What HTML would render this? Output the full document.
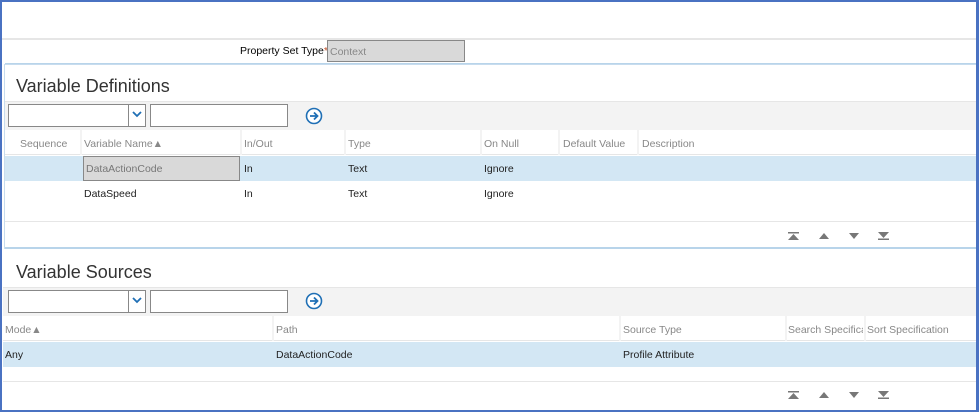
<!DOCTYPE html>
<html><head><style>
*{margin:0;padding:0;box-sizing:border-box}
body{width:979px;height:412px;position:relative;background:#fff;font-family:"Liberation Sans",sans-serif;font-size:10.5px;color:#222;overflow:hidden}
.a{position:absolute}
.frame{left:0;top:0;width:979px;height:412px;border:2px solid #4a72c2;border-right-width:3px}
.h{color:#888;font-size:10.5px}
.t{font-size:18px;color:#333}
.sel{background:#d3e7f4}
.inp{background:#fff;border:1px solid #888}
.sep{position:absolute;width:2px;height:25px;background:#f3f3f3}
</style></head><body>
<div class="a" style="left:0;top:38px;width:979px;height:2px;background:#e6e6e6"></div>
<div class="a" style="left:240px;top:45px;font-size:10.5px;color:#000">Property Set Type<span style="color:#c0502a">*</span></div>
<div class="a" style="left:327px;top:40px;width:138px;height:22px;background:#d9d9d9;border:1px solid #888;color:#888;padding:5px 2px;font-size:10.5px">Context</div>
<div class="a" style="left:5px;top:63px;width:974px;height:2px;background:#b8d4ea"></div>
<div class="a" style="left:4px;top:64px;width:974px;height:185px;border:1px solid #c7dcee"></div>
<div class="a t" style="left:16px;top:76px">Variable Definitions</div>
<div class="a" style="left:5px;top:101px;width:971px;height:29px;background:#f3f3f3;border-top:1px solid #e6e6e6"></div>
<div class="a inp" style="left:8px;top:104px;width:138px;height:23px"></div>
<div class="a" style="left:128px;top:104px;width:1px;height:23px;background:#888"></div>
<svg class="a" style="left:132px;top:110px" width="10" height="8"><path d="M1 2L5 6L9 2" stroke="#1f6fb5" stroke-width="1.8" fill="none"/></svg>
<div class="a inp" style="left:150px;top:104px;width:138px;height:23px"></div>
<svg class="a" style="left:305px;top:107px" width="18" height="18"><circle cx="9" cy="9" r="7.5" stroke="#1f6fb5" stroke-width="1.6" fill="#fff"/><path d="M5 9H12M9 5.5L12.5 9L9 12.5" stroke="#1f6fb5" stroke-width="1.8" fill="none"/></svg>
<div class="a" style="left:5px;top:130px;width:971px;height:25px;border-bottom:1px solid #e6e6e6"></div>
<div class="sep" style="left:80px;top:130px"></div><div class="sep" style="left:240px;top:130px"></div><div class="sep" style="left:344px;top:130px"></div><div class="sep" style="left:480px;top:130px"></div><div class="sep" style="left:558px;top:130px"></div><div class="sep" style="left:637px;top:130px"></div>
<div class="a h" style="left:20px;top:138px">Sequence</div>
<div class="a h" style="left:84px;top:138px">Variable Name▲</div>
<div class="a h" style="left:244px;top:138px">In/Out</div>
<div class="a h" style="left:348px;top:138px">Type</div>
<div class="a h" style="left:484px;top:138px">On Null</div>
<div class="a h" style="left:563px;top:138px">Default Value</div>
<div class="a h" style="left:642px;top:138px">Description</div>
<div class="a sel" style="left:5px;top:156px;width:971px;height:25px"></div>
<div class="a" style="left:83px;top:156px;width:157px;height:25px;background:#d9d9d9;border:1px solid #888;color:#777;padding:6px 2px">DataActionCode</div>
<div class="a" style="left:244px;top:163px">In</div><div class="a" style="left:348px;top:163px">Text</div><div class="a" style="left:484px;top:163px">Ignore</div>
<div class="a" style="left:84px;top:188px">DataSpeed</div>
<div class="a" style="left:244px;top:188px">In</div><div class="a" style="left:348px;top:188px">Text</div><div class="a" style="left:484px;top:188px">Ignore</div>
<div class="a" style="left:5px;top:221px;width:971px;height:1px;background:#e6e6e6"></div>
<div class="a" style="left:5px;top:247px;width:974px;height:2px;background:#b8d4ea"></div>
<svg class="a" style="left:786px;top:230px" width="110" height="12" fill="#777"><path d="M2 2H13V3.5H2ZM7.5 4L13 10H2Z"/><path d="M33 9L38 3L43 9Z"/><path d="M63 3H73L68 9Z"/><path d="M92 2H103L97.5 8ZM92 8.5H103V10H92Z"/></svg>
<div class="a t" style="left:16px;top:262px">Variable Sources</div>
<div class="a" style="left:3px;top:287px;width:973px;height:29px;background:#f3f3f3;border-top:1px solid #e6e6e6"></div>
<div class="a inp" style="left:8px;top:290px;width:138px;height:23px"></div>
<div class="a" style="left:128px;top:290px;width:1px;height:23px;background:#888"></div>
<svg class="a" style="left:132px;top:296px" width="10" height="8"><path d="M1 2L5 6L9 2" stroke="#1f6fb5" stroke-width="1.8" fill="none"/></svg>
<div class="a inp" style="left:150px;top:290px;width:138px;height:23px"></div>
<svg class="a" style="left:305px;top:292px" width="18" height="18"><circle cx="9" cy="9" r="7.5" stroke="#1f6fb5" stroke-width="1.6" fill="#fff"/><path d="M5 9H12M9 5.5L12.5 9L9 12.5" stroke="#1f6fb5" stroke-width="1.8" fill="none"/></svg>
<div class="a" style="left:3px;top:316px;width:973px;height:25px;border-bottom:1px solid #e6e6e6"></div>
<div class="sep" style="left:272px;top:316px"></div><div class="sep" style="left:619px;top:316px"></div><div class="sep" style="left:785px;top:316px"></div><div class="sep" style="left:864px;top:316px"></div>
<div class="a h" style="left:5px;top:324px">Mode▲</div>
<div class="a h" style="left:276px;top:324px">Path</div>
<div class="a h" style="left:623px;top:324px">Source Type</div>
<div class="a h" style="left:788px;top:324px;width:75px;overflow:hidden;white-space:nowrap">Search Specification</div>
<div class="a h" style="left:867px;top:324px">Sort Specification</div>
<div class="a sel" style="left:3px;top:342px;width:973px;height:25px"></div>
<div class="a" style="left:5px;top:349px">Any</div>
<div class="a" style="left:276px;top:349px">DataActionCode</div>
<div class="a" style="left:623px;top:349px">Profile Attribute</div>
<div class="a" style="left:3px;top:381px;width:973px;height:1px;background:#e6e6e6"></div>
<svg class="a" style="left:786px;top:389px" width="110" height="12" fill="#777"><path d="M2 2H13V3.5H2ZM7.5 4L13 10H2Z"/><path d="M33 9L38 3L43 9Z"/><path d="M63 3H73L68 9Z"/><path d="M92 2H103L97.5 8ZM92 8.5H103V10H92Z"/></svg>
<div class="a frame"></div>
</body></html>
